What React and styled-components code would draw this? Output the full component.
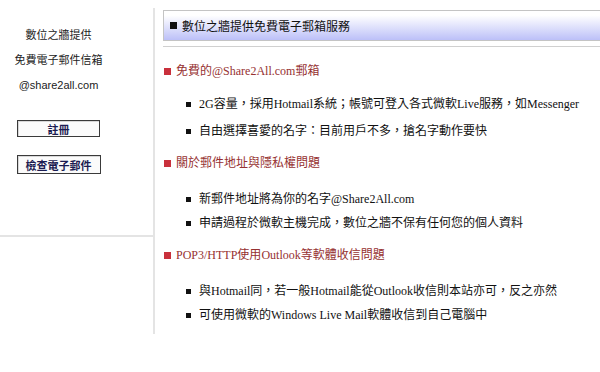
import React from "react";
import styled, { createGlobalStyle } from "styled-components";

const GlobalStyle = createGlobalStyle`
  html, body {
    margin: 0;
    padding: 0;
    background: #ffffff;
    overflow: hidden;
  }
  body {
    font-family: "Liberation Serif", "Noto Sans CJK TC", serif;
    font-size: 12px;
    color: #111;
  }
`;

const sections = [
  {
    title: (
      <>
        免費的<Latin>@Share2All.com</Latin>郵箱
      </>
    ),
    items: [
      <>
        <Latin>2G</Latin>容量，採用<Latin>Hotmail</Latin>系統；帳號可登入各式微軟<Latin>Live</Latin>服務，如<Latin>Messenger</Latin>
      </>,
      <>自由選擇喜愛的名字：目前用戶不多，搶名字動作要快</>,
    ],
  },
  {
    title: <>關於郵件地址與隱私權問題</>,
    items: [
      <>
        新郵件地址將為你的名字<Latin>@Share2All.com</Latin>
      </>,
      <>申請過程於微軟主機完成，數位之牆不保有任何您的個人資料</>,
    ],
  },
  {
    title: (
      <>
        <Latin>POP3/HTTP</Latin>使用<Latin>Outlook</Latin>等軟體收信問題
      </>
    ),
    items: [
      <>
        與<Latin>Hotmail</Latin>同，若一般<Latin>Hotmail</Latin>能從<Latin>Outlook</Latin>收信則本站亦可，反之亦然
      </>,
      <>
        可使用微軟的<Latin>Windows Live Mail</Latin>軟體收信到自己電腦中
      </>,
    ],
  },
];

function Latin({ children }) {
  return <LatinText>{children}</LatinText>;
}

export default function App() {
  return (
    <>
      <GlobalStyle />
      <Page>
        <Sidebar>
          <SideInner>
            <SideLine>數位之牆提供</SideLine>
            <SideLine>免費電子郵件信箱</SideLine>
            <SideLine>@share2all.com</SideLine>
            <SideButton $width={83} $height={17}>註冊</SideButton>
            <SideButton $width={84} $height={19}>
              檢查電子郵件
            </SideButton>
          </SideInner>
        </Sidebar>

        <Main>
          <TitleBar>
            <TitleMark />
            <span>數位之牆提供免費電子郵箱服務</span>
          </TitleBar>
          <Rule />

          {sections.map((s, i) => (
            <Section key={i} $first={i === 0}>
              <Heading>
                <HeadingMark />
                <span>{s.title}</span>
              </Heading>
              <List $first={i === 0}>
                {s.items.map((item, j) => (
                  <Item key={j}>
                    <span>{item}</span>
                  </Item>
                ))}
              </List>
            </Section>
          ))}
        </Main>
      </Page>
    </>
  );
}

const LatinText = styled.span`
  font-family: "Liberation Serif", serif;
`;

const Page = styled.div`
  display: flex;
  align-items: flex-start;
  width: 620px;
`;

const Sidebar = styled.aside`
  width: 153px;
  flex: none;
  height: 237px;
  border-bottom: 2px solid #e4e4e4;
  box-sizing: border-box;
`;

const SideInner = styled.div`
  width: 117px;
  padding-top: 27px;
  display: flex;
  flex-direction: column;
  align-items: center;
  gap: 0;
  font-family: "Liberation Sans", "Noto Sans CJK TC", sans-serif;
  font-size: 11px;
  color: #222;
`;

const SideLine = styled.div`
  line-height: 16px;
  height: 25px;
`;

const SideButton = styled.div`
  width: ${(p) => p.$width}px;
  height: ${(p) => p.$height}px;
  margin-top: 18px;
  box-sizing: border-box;
  border: 1px solid #3a3a3a;
  box-shadow: inset 1px 1px 0 #d8d8d8;
  background: #fbfbfb;
  display: flex;
  align-items: center;
  justify-content: center;
  font-family: "Noto Sans CJK TC", sans-serif;
  font-weight: 700;
  font-size: 11px;
  color: #1c1c52;
`;

const Main = styled.main`
  flex: 1;
  margin-top: 8px;
  padding: 2px 0 7px 8px;
  border-left: 2px solid #e4e4e4;
`;

const TitleBar = styled.div`
  height: 31px;
  box-sizing: border-box;
  border: 1px solid #c4c4c4;
  border-right: none;
  background: linear-gradient(to bottom, #ffffff 15%, #bcc0f8 100%);
  display: flex;
  align-items: center;
  gap: 5px;
  padding-left: 6px;
  font-family: "Noto Sans CJK TC", sans-serif;
  font-size: 12px;
  color: #111;
`;

const TitleMark = styled.span`
  width: 7px;
  height: 7px;
  background: #111;
`;

const Rule = styled.div`
  height: 1px;
  margin-top: 5px;
  background: #d0d0d0;
`;

const Section = styled.section`
  margin-top: ${(p) => (p.$first ? 14 : 10)}px;
`;

const Heading = styled.div`
  display: flex;
  align-items: center;
  gap: 5px;
  padding-left: 1px;
  line-height: 20px;
  font-family: "Liberation Serif", "Noto Sans CJK TC", serif;
  font-size: 12px;
  color: #963131;
`;

const HeadingMark = styled.span`
  width: 7px;
  height: 7px;
  background: #c9303c;
`;

const List = styled.ul`
  list-style: none;
  display: flex;
  flex-direction: column;
  gap: ${(p) => (p.$first ? 3 : 0)}px;
  margin: ${(p) => (p.$first ? 11 : 14)}px 0 0;
  padding: 0 0 0 23px;
`;

const Item = styled.li`
  display: flex;
  align-items: center;
  line-height: 24px;
  white-space: nowrap;
  font-family: "Liberation Serif", "Noto Sans CJK TC", serif;
  font-size: 12px;
  color: #111;

  &::before {
    content: "";
    width: 5px;
    height: 5px;
    margin-right: 8px;
    background: #111;
    flex: none;
  }
`;
